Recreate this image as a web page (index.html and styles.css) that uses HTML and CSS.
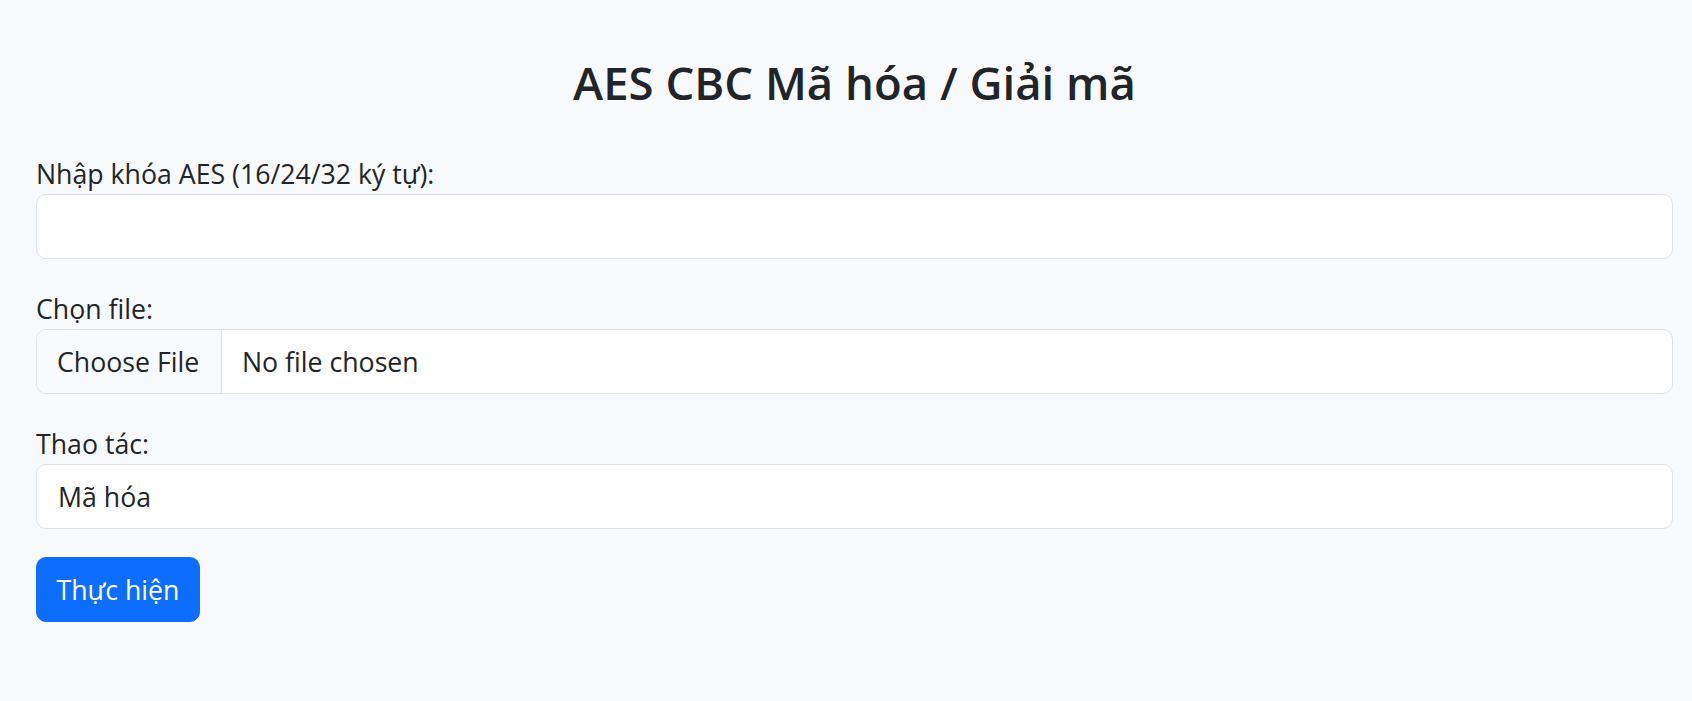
FILE: index.html
```html
<!DOCTYPE html>
<html lang="vi">
<head>
<meta charset="utf-8">
<title>AES CBC Mã hóa / Giải mã</title>
<link rel="stylesheet" href="styles.css">
</head>
<body>
<main class="page">
  <h2 class="title">AES CBC Mã hóa / Giải mã</h2>
  <form class="form">
    <div class="field">
      <label class="field-label" for="key">Nhập khóa AES (16/24/32 ký tự):</label>
      <input class="control" type="text" id="key">
    </div>
    <div class="field">
      <label class="field-label" for="file">Chọn file:</label>
      <div class="control file-control">
        <span class="file-btn">Choose File</span>
        <span class="file-name">No file chosen</span>
      </div>
    </div>
    <div class="field field-last">
      <label class="field-label" for="op">Thao tác:</label>
      <select class="control select" id="op">
        <option>Mã hóa</option>
        <option>Giải mã</option>
      </select>
    </div>
    <div class="actions">
      <button type="button" class="btn-primary">Thực hiện</button>
    </div>
  </form>
</main>
</body>
</html>
```
FILE: styles.css
```css
* { box-sizing: border-box; }
html, body { margin: 0; padding: 0; }
body {
  background: #f8f9fa;
  color: #212529;
  font-family: "Open Sans", "Noto Sans", sans-serif;
  font-size: 26.7px;
}
.page {
  padding: 55px 19px 40px 36px;
}
.title {
  margin: 0 0 43px;
  text-align: center;
  font-size: 45.5px;
  font-weight: 600;
  line-height: 1.2;
}
.form { display: flex; flex-direction: column; }
.field { display: flex; flex-direction: column; margin-bottom: 29px; }
.field-last { margin-bottom: 28px; }
.field-label {
  display: block;
  line-height: 41px;
  height: 41px;
}
.control {
  display: block;
  width: 100%;
  height: 65px;
  background: #fff;
  border: 1px solid #dee2e6;
  border-radius: 10px;
  font-family: inherit;
  font-size: 26.7px;
  color: #212529;
  padding: 0 21px;
  margin: 0;
  outline: none;
}
.select {
  appearance: none;
  -webkit-appearance: none;
}
.file-control {
  display: flex;
  align-items: stretch;
  padding: 0;
  overflow: hidden;
}
.file-btn {
  display: flex;
  align-items: center;
  width: 185px;
  padding-left: 20px;
  background: #f8f9fa;
  border-right: 1px solid #dee2e6;
}
.file-name {
  display: flex;
  align-items: center;
  padding-left: 20px;
}
.actions { display: flex; }
.btn-primary {
  width: 164px;
  height: 65px;
  background: #0d6efd;
  color: #fff;
  border: 1px solid #0d6efd;
  border-radius: 10px;
  font-family: inherit;
  font-size: 26.7px;
  padding: 0;
}
```
